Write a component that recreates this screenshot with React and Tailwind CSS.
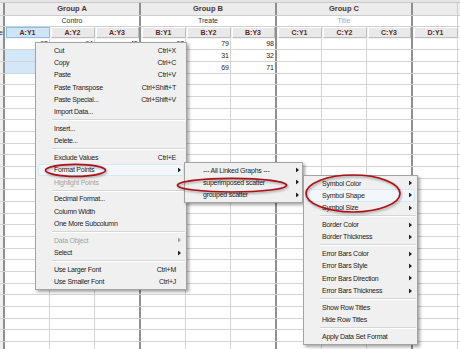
import React from 'react';

const W = ['w-[45px]', 'w-[45px]', 'w-[44px]', 'w-[45px]', 'w-[45px]', 'w-[44px]', 'w-[45px]', 'w-[45px]', 'w-[44px]', 'w-[45px]', 'flex-1'];
const HAS_BORDER = [true, true, false, true, true, false, true, true, false, true, false];

const Div = () => <div className="w-[2px] shrink-0 self-stretch bg-[#8f8f8f]" />;

function Row({ h, cls = '', stub, cells }) {
  return (
    <div className={`flex ${h} ${cls}`}>
      <div className="w-[3px] shrink-0 overflow-hidden flex justify-end items-center bg-[#efefef]">{stub}</div>
      <Div />
      {cells.slice(0, 3)}
      <Div />
      {cells.slice(3, 6)}
      <Div />
      {cells.slice(6, 9)}
      <Div />
      {cells[9]}
      {cells[10]}
    </div>
  );
}

const HEAD = ['A:Y1', 'A:Y2', 'A:Y3', 'B:Y1', 'B:Y2', 'B:Y3', 'C:Y1', 'C:Y2', 'C:Y3', 'D:Y1', ''];

const DATA = [
  { 0: '93', 1: '94', 2: '45', 3: '67', 4: '79', 5: '98' },
  { 0: '12', 1: '56', 2: '20', 3: '44', 4: '31', 5: '32' },
  { 0: '38', 1: '27', 2: '61', 3: '52', 4: '69', 5: '71' },
];

function Grid() {
  const headCells = HEAD.map((t, i) => (
    <div key={i} className={`${W[i]} shrink-0 h-full p-[0.5px]`}>
      {i === 0 ? (
        <div className="h-full flex items-center justify-center bg-[#cfe4f7] border border-[#8fbbe4] font-bold text-[#5a2a2a]">{t}</div>
      ) : (
        <div className="h-full flex items-center justify-center bg-[#e9e9e9] border border-t-white border-l-white border-r-[#bdbdbd] border-b-[#bdbdbd] font-bold text-[#5a2a2a]">{t}</div>
      )}
    </div>
  ));

  const rows = [];
  for (let r = 0; r < 27; r++) {
    const vals = DATA[r] || {};
    const cells = W.map((w, i) => {
      let bg = 'bg-white';
      if (i === 0 && (r === 1 || r === 2)) bg = 'bg-[#d3e7f9]';
      return (
        <div
          key={i}
          className={`${w} shrink-0 h-full flex items-center justify-end pr-[1px] ${bg} ${HAS_BORDER[i] ? 'border-r border-[#d4d4d4]' : ''}`}
        >
          {vals[i] || ''}
        </div>
      );
    });
    rows.push(<Row key={r} h="h-[11.68px]" cls="border-b border-[#d4d4d4]" cells={cells} />);
  }

  return (
    <div className="flex flex-col">
      <div className="h-[3px] bg-[#e4e4e4] border-b border-[#c9c9c9]" />
      {/* group row */}
      <div className="flex h-[12.5px] bg-[#ececec] border-b border-[#cdcdcd]">
        <div className="w-[3px] shrink-0 bg-[#efefef]" />
        <Div />
        <div className="w-[134px] shrink-0 flex items-center justify-center font-bold text-[7.5px] text-[#4d3333]">Group A</div>
        <Div />
        <div className="w-[134px] shrink-0 flex items-center justify-center font-bold text-[7.5px] text-[#4d3333]">Group B</div>
        <Div />
        <div className="w-[134px] shrink-0 flex items-center justify-center font-bold text-[7.5px] text-[#4d3333]">Group C</div>
        <Div />
        <div className="w-[45px] shrink-0 border-r border-[#cdcdcd]" />
        <div className="flex-1" />
      </div>
      {/* subtitle row */}
      <div className="flex h-[11px] bg-white border-b border-[#d0d0d0]">
        <div className="w-[3px] shrink-0 bg-[#efefef]" />
        <Div />
        <div className="w-[134px] shrink-0 flex items-center justify-center text-[#333]">Contro</div>
        <Div />
        <div className="w-[134px] shrink-0 flex items-center justify-center text-[#333]">Treate</div>
        <Div />
        <div className="w-[134px] shrink-0 flex items-center justify-center text-[#ababab]">Title</div>
        <Div />
        <div className="w-[45px] shrink-0 border-r border-[#d0d0d0]" />
        <div className="flex-1" />
      </div>
      <Row h="h-[12px]" cls="bg-[#f4f4f4]" stub={<span className="whitespace-nowrap text-[#333]">Title</span>} cells={headCells} />
      {rows}
    </div>
  );
}

const Arrow = ({ dis, right }) => (
  <svg width="3" height="5" viewBox="0 0 3 5" className={`absolute top-1/2 -translate-y-1/2 ${right}`}>
    <polygon points="0,0 3,2.5 0,5" fill={dis ? '#a3a3a3' : '#222'} />
  </svg>
);

function Menu({ pos, items, arrowRight }) {
  return (
    <div className={`absolute ${pos} bg-[#f0f0f0] border border-[#a3a3a3] py-[1px] shadow-[2px_2px_3px_rgba(0,0,0,0.35)] tracking-[-0.25px]`}>
      {items.map((it, i) =>
        it === 'sep' ? (
          <div key={i} className="h-[4.5px] flex flex-col justify-center pl-[16px] pr-[1px]">
            <div className="h-px bg-[#d5d5d5]" />
            <div className="h-px bg-white" />
          </div>
        ) : (
          <div
            key={i}
            className={`relative h-[12.3px] flex items-center pl-[18px] pr-[10px] ${it.dis ? 'text-[#a3a3a3]' : 'text-[#1b1b1b]'}`}
          >
            {it.hover && <div className="absolute left-[2px] right-[2px] top-0 bottom-0 rounded-[2px] border border-[#d8e7f7] bg-[#f3f7fc]" />}
            <span className="relative flex-1 whitespace-nowrap">{it.t}</span>
            {it.s && <span className="relative whitespace-nowrap">{it.s}</span>}
            {it.arrow && <Arrow dis={it.dis} right={arrowRight} />}
          </div>
        )
      )}
    </div>
  );
}

const MENU1 = [
  { t: 'Cut', s: 'Ctrl+X' },
  { t: 'Copy', s: 'Ctrl+C' },
  { t: 'Paste', s: 'Ctrl+V' },
  { t: 'Paste Transpose', s: 'Ctrl+Shift+T' },
  { t: 'Paste Special...', s: 'Ctrl+Shift+V' },
  { t: 'Import Data...' },
  'sep',
  { t: 'Insert...' },
  { t: 'Delete...' },
  'sep',
  { t: 'Exclude Values', s: 'Ctrl+E' },
  { t: 'Format Points', arrow: true, hover: true },
  { t: 'Highlight Points', dis: true },
  'sep',
  { t: 'Decimal Format...' },
  { t: 'Column Width' },
  { t: 'One More Subcolumn' },
  'sep',
  { t: 'Data Object', arrow: true, dis: true },
  { t: 'Select', arrow: true },
  'sep',
  { t: 'Use Larger Font', s: 'Ctrl+M' },
  { t: 'Use Smaller Font', s: 'Ctrl+J' },
];

const MENU2 = [
  { t: '--- All Linked Graphs ---', arrow: true },
  { t: 'superimposed scatter', arrow: true },
  { t: 'grouped scatter', arrow: true },
];

const MENU3 = [
  { t: 'Symbol Color', arrow: true },
  { t: 'Symbol Shape', arrow: true, hover: true },
  { t: 'Symbol Size', arrow: true },
  'sep',
  { t: 'Border Color', arrow: true },
  { t: 'Border Thickness', arrow: true },
  'sep',
  { t: 'Error Bars Color', arrow: true },
  { t: 'Error Bars Style', arrow: true },
  { t: 'Error Bars Direction', arrow: true },
  { t: 'Error Bars Thickness', arrow: true },
  'sep',
  { t: 'Show Row Titles' },
  { t: 'Hide Row Titles' },
  'sep',
  { t: 'Apply Data Set Format' },
];

function Ellipses() {
  return (
    <svg className="absolute left-0 top-0 pointer-events-none" width="460" height="349" viewBox="0 0 460 349">
      <defs>
        <filter id="b" x="-20%" y="-50%" width="140%" height="200%">
          <feGaussianBlur stdDeviation="1" />
        </filter>
      </defs>
      <g fill="none" stroke="rgba(0,0,0,0.3)" strokeWidth="2" filter="url(#b)">
        <ellipse cx="76.5" cy="171.5" rx="30" ry="6" />
        <ellipse cx="233" cy="186.5" rx="54.5" ry="6.8" />
        <ellipse cx="354" cy="195" rx="47" ry="18.5" />
      </g>
      <g fill="none" stroke="#ad1016" strokeWidth="1.7">
        <ellipse cx="75.5" cy="170.3" rx="30" ry="6" />
        <ellipse cx="232" cy="185.2" rx="54.5" ry="6.8" />
        <ellipse cx="353" cy="193.5" rx="47" ry="18.5" />
      </g>
    </svg>
  );
}

export default function App() {
  return (
    <div className="relative w-[460px] h-[349px] overflow-hidden bg-white font-['Liberation_Sans',Arial,sans-serif] text-[7px] leading-none text-[#1e1e1e]">
      <Grid />
      <Menu pos="left-[35px] top-[42px] w-[152px]" items={MENU1} arrowRight="right-[5px]" />
      <Menu pos="left-[184px] top-[162px] w-[119px]" items={MENU2} arrowRight="right-[3px]" />
      <Menu pos="left-[303px] top-[175px] w-[115px]" items={MENU3} arrowRight="right-[5px]" />
      <Ellipses />
    </div>
  );
}
